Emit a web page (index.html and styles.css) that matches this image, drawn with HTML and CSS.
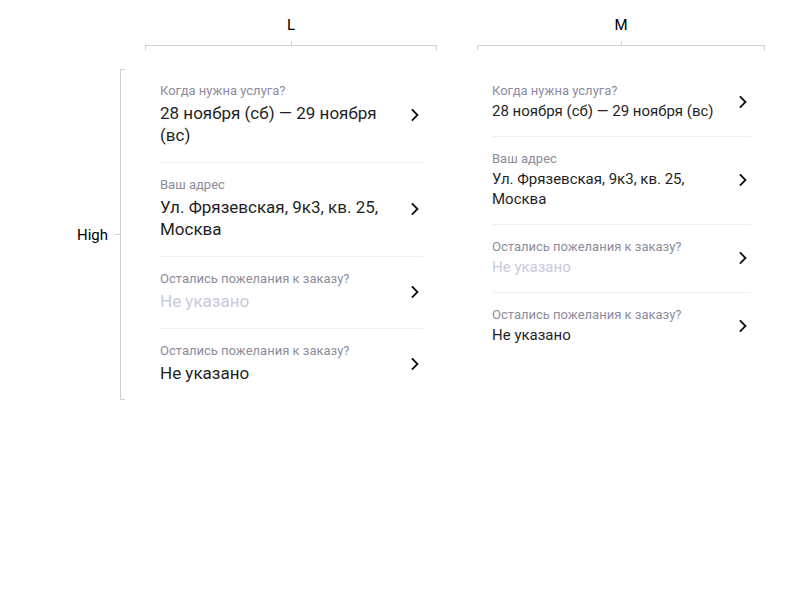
FILE: index.html
```html
<!DOCTYPE html>
<html lang="ru">
<head>
<meta charset="utf-8">
<link rel="stylesheet" href="styles.css">
</head>
<body>
<div class="page">
  <div class="col-head head-l">
    <div class="col-title">L</div>
    <div class="col-tick"></div>
    <div class="col-bracket"></div>
  </div>
  <div class="col-head head-m">
    <div class="col-title">M</div>
    <div class="col-tick"></div>
    <div class="col-bracket"></div>
  </div>

  <div class="side">
    <span class="side-title">High</span>
    <span class="side-tick"></span>
    <span class="side-bracket"></span>
  </div>

  <div class="card card-l">
    <div class="row">
      <div class="text">
        <div class="label">Когда нужна услуга?</div>
        <div class="value">28 ноября (сб) — 29 ноября (вс)</div>
      </div>
      <svg class="chev" viewBox="0 0 16 16"><polyline points="5.5,3 10.5,8 5.5,13"/></svg>
    </div>
    <div class="row">
      <div class="text">
        <div class="label">Ваш адрес</div>
        <div class="value">Ул. Фрязевская, 9к3, кв. 25, Москва</div>
      </div>
      <svg class="chev" viewBox="0 0 16 16"><polyline points="5.5,3 10.5,8 5.5,13"/></svg>
    </div>
    <div class="row">
      <div class="text">
        <div class="label">Остались пожелания к заказу?</div>
        <div class="value empty">Не указано</div>
      </div>
      <svg class="chev" viewBox="0 0 16 16"><polyline points="5.5,3 10.5,8 5.5,13"/></svg>
    </div>
    <div class="row">
      <div class="text">
        <div class="label">Остались пожелания к заказу?</div>
        <div class="value">Не указано</div>
      </div>
      <svg class="chev" viewBox="0 0 16 16"><polyline points="5.5,3 10.5,8 5.5,13"/></svg>
    </div>
  </div>

  <div class="card card-m">
    <div class="row">
      <div class="text">
        <div class="label">Когда нужна услуга?</div>
        <div class="value">28 ноября (сб) — 29 ноября (вс)</div>
      </div>
      <svg class="chev" viewBox="0 0 16 16"><polyline points="5.5,3 10.5,8 5.5,13"/></svg>
    </div>
    <div class="row">
      <div class="text">
        <div class="label">Ваш адрес</div>
        <div class="value">Ул. Фрязевская, 9к3, кв. 25, Москва</div>
      </div>
      <svg class="chev" viewBox="0 0 16 16"><polyline points="5.5,3 10.5,8 5.5,13"/></svg>
    </div>
    <div class="row">
      <div class="text">
        <div class="label">Остались пожелания к заказу?</div>
        <div class="value empty">Не указано</div>
      </div>
      <svg class="chev" viewBox="0 0 16 16"><polyline points="5.5,3 10.5,8 5.5,13"/></svg>
    </div>
    <div class="row">
      <div class="text">
        <div class="label">Остались пожелания к заказу?</div>
        <div class="value">Не указано</div>
      </div>
      <svg class="chev" viewBox="0 0 16 16"><polyline points="5.5,3 10.5,8 5.5,13"/></svg>
    </div>
  </div>
</div>
</body>
</html>
```
FILE: styles.css
```css
html, body {
  margin: 0;
  padding: 0;
  background: #ffffff;
}
body {
  font-family: Roboto, "Liberation Sans", Arial, sans-serif;
  color: #1f1f24;
}
.page {
  display: grid;
  grid-template-columns: 145px 292px 40px 288px;
  grid-template-rows: auto auto;
  padding-top: 16px;
}
.head-l { grid-column: 2; grid-row: 1; }
.head-m { grid-column: 4; grid-row: 1; }
.side { grid-column: 1; grid-row: 2; }
.card-l { grid-column: 2; grid-row: 2; }
.card-m { grid-column: 4; grid-row: 2; align-self: start; }

.col-head {
  display: flex;
  flex-direction: column;
  align-items: center;
}
.col-title {
  font-size: 15px;
  line-height: 18px;
  color: #000;
  margin-bottom: 7px;
}
.col-tick {
  width: 1px;
  height: 4px;
  background: #d0d0d4;
}
.col-bracket {
  align-self: stretch;
  height: 4px;
  border: 1px solid #d0d0d4;
  border-bottom: none;
  margin-bottom: 19px;
}

.side {
  display: flex;
  align-items: center;
  justify-content: flex-end;
  padding-right: 20px;
}
.side-title {
  font-size: 15px;
  line-height: 18px;
  color: #000;
  margin-right: 7px;
}
.side-tick {
  width: 5px;
  height: 1px;
  background: #d0d0d4;
}
.side-bracket {
  align-self: stretch;
  width: 4px;
  border: 1px solid #d0d0d4;
  border-right: none;
}

.card {
  display: flex;
  flex-direction: column;
  padding: 0 14px 0 15px;
}
.row {
  display: flex;
  align-items: center;
  border-bottom: 1px solid #efeff2;
}
.row:last-child { border-bottom: none; }
.text {
  flex: 1;
  min-width: 0;
  margin-right: 12px;
}
.label {
  font-size: 13px;
  line-height: 16px;
  color: #8c8c9e;
}
.value.empty { color: #c9c9dd; }

.card-l .row { padding: 14px 0 16px; }
.card-l .label { margin-bottom: 3px; }
.card-l .value { font-size: 17px; line-height: 22px; }

.card-m .row { padding: 14px 0 15px; }
.card-m .label { margin-bottom: 2px; }
.card-m .value { font-size: 15px; line-height: 20px; }

.chev {
  width: 16px;
  height: 16px;
  flex: none;
  fill: none;
  stroke: #111;
  stroke-width: 1.8;
  stroke-linecap: square;
  stroke-linejoin: miter;
}
```
